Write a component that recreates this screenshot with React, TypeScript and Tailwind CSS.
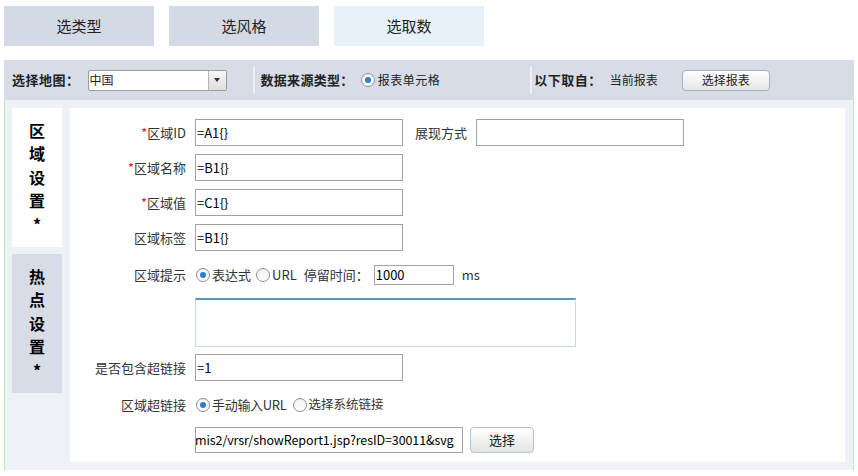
import React from 'react';

const FONT = '"Noto Sans CJK SC", "Noto Sans", sans-serif';

function Radio({ checked }: { checked?: boolean }) {
  return (
    <span className="inline-flex h-[14px] w-[14px] shrink-0 items-center justify-center rounded-full border border-[#8f8f8f] bg-gradient-to-b from-[#f2f2f2] to-white">
      {checked && <span className="h-[6px] w-[6px] rounded-full bg-[#2e7bd6]" />}
    </span>
  );
}

function Field({ label, required, value, className }: { label: string; required?: boolean; value?: string; className?: string }) {
  return (
    <div className={'flex h-[27px] items-center ' + (className ?? '')}>
      <label className="w-[116px] text-right text-[13px] text-[#333]">
        {required && <span className="text-[#e02020]">*</span>}
        {label}
      </label>
      <div className="ml-[9px] flex h-[27px] w-[208px] items-center border border-[#a3a3a3] bg-white px-[1px] text-[13px] text-black">
        {value}
      </div>
    </div>
  );
}

function SideTab({ chars, active }: { chars: string[]; active?: boolean }) {
  return (
    <div
      className={
        'flex h-[139px] w-[50px] flex-col items-center justify-center text-[16px] font-bold leading-[23.5px] text-black ' +
        (active ? 'bg-white' : 'bg-[#d7dce7]')
      }
    >
      {chars.map((c, i) => (
        <span key={i}>{c}</span>
      ))}
    </div>
  );
}

export default function App() {
  const tabs = [
    { name: '选类型', active: false },
    { name: '选风格', active: false },
    { name: '选取数', active: true },
  ];

  return (
    <div className="h-[476px] w-[858px] overflow-hidden bg-white" style={{ fontFamily: FONT }}>
      {/* steps */}
      <div className="ml-[4px] mt-[6px] flex gap-[15px]">
        {tabs.map((t) => (
          <div
            key={t.name}
            className={
              'flex h-[40px] w-[150px] items-center justify-center text-[15px] text-[#222] ' +
              (t.active ? 'bg-[#e8f0fa]' : 'bg-[#d3d9e5]')
            }
          >
            {t.name}
          </div>
        ))}
      </div>

      {/* toolbar */}
      <div className="mx-[4px] mt-[14px] flex h-[40px] items-center bg-[#d7dce7] pl-[8px] text-[12px] text-[#222]">
        <span className="text-[13px] font-bold tracking-[0.5px]">选择地图：</span>
        <div className="ml-[8px] flex h-[21px] w-[139px] items-stretch rounded-[2px] border border-[#9c9c9c] bg-white">
          <span className="flex-1 pl-[1px] text-[12px] leading-[18px]">中国</span>
          <span className="flex w-[18px] items-center justify-center border-l border-[#b5b5b5] bg-gradient-to-b from-[#f7f7f7] to-[#dedede]">
            <span className="h-0 w-0 border-x-[3.5px] border-t-[4px] border-x-transparent border-t-[#333]" />
          </span>
        </div>
        <span className="ml-[26px] h-[28px] w-[2px] bg-[#eceff5]" />
        <span className="ml-[6px] text-[13px] font-bold tracking-[0.3px]">数据来源类型：</span>
        <span className="ml-[7px] flex items-center gap-[3px]">
          <Radio checked />
          <span className="tracking-[0.5px]">报表单元格</span>
        </span>
        <span className="ml-[90px] h-[28px] w-[2px] bg-[#eceff5]" />
        <span className="ml-[2px] text-[13px] font-bold tracking-[0.5px]">以下取自：</span>
        <span className="ml-[8px]">当前报表</span>
        <button className="ml-[24px] h-[21px] w-[88px] rounded-[4px] border border-[#9fb4cc] bg-gradient-to-b from-white to-[#e6e6e6] text-[12px] text-[#222]">
          选择报表
        </button>
      </div>

      {/* content */}
      <div className="mx-[4px] flex h-[370px] gap-[8px] border-x border-[#b6efb6] bg-[#eef1f6] pb-[8px] pl-[7px] pr-[8px] pt-[8px]">
        <div className="flex flex-col gap-[7px]">
          <SideTab chars={['区', '域', '设', '置', '*']} active />
          <SideTab chars={['热', '点', '设', '置', '*']} />
        </div>

        <div className="flex-1 bg-white pt-[11px]">
          <div className="flex items-center">
            <Field label="区域ID" required value="=A1{}" />
            <span className="ml-[12px] text-[13px] text-[#333]">展现方式</span>
            <div className="ml-[9px] h-[27px] w-[208px] border border-[#a3a3a3]" />
          </div>
          <Field className="mt-[8px]" label="区域名称" required value="=B1{}" />
          <Field className="mt-[8px]" label="区域值" required value="=C1{}" />
          <Field className="mt-[8px]" label="区域标签" value="=B1{}" />

          <div className="mt-[10px] flex h-[27px] items-center text-[13px] text-[#333]">
            <label className="w-[116px] text-right">区域提示</label>
            <span className="ml-[10px] flex items-center gap-[2px]">
              <Radio checked />
              <span>表达式</span>
            </span>
            <span className="ml-[5px] flex items-center gap-[2px]">
              <Radio />
              <span>URL</span>
            </span>
            <span className="ml-[7px]">停留时间：</span>
            <div className="ml-[5px] flex h-[20px] w-[80px] items-center border border-[#a3a3a3] px-[1px] text-black">1000</div>
            <span className="ml-[8px]">ms</span>
          </div>

          <div className="ml-[125px] mt-[10px] h-[49px] w-[381px] border border-t-2 border-[#c9d9ea] border-t-[#5b93c5]" />

          <Field className="mt-[7px]" label="是否包含超链接" value="=1" />

          <div className="mt-[10px] flex h-[27px] items-center text-[13px] text-[#333]">
            <label className="w-[116px] text-right">区域超链接</label>
            <span className="ml-[10px] flex items-center gap-[2px]">
              <Radio checked />
              <span className="tracking-[-0.3px]">手动输入URL</span>
            </span>
            <span className="ml-[6px] flex items-center gap-[2px]">
              <Radio />
              <span className="text-[12.5px]">选择系统链接</span>
            </span>
          </div>

          <div className="ml-[125px] mt-[9px] flex items-center">
            <div className="flex h-[26px] w-[268px] items-center overflow-hidden whitespace-nowrap border border-[#a3a3a3] text-[12.5px] text-black">
              <span className="-ml-[1px] tracking-[-0.1px]">mis2/vrsr/showReport1.jsp?resID=30011&amp;svg</span>
            </div>
            <button className="ml-[7px] h-[26px] w-[64px] rounded-[4px] border border-[#b3c3d6] bg-gradient-to-b from-white to-[#e4e4e4] text-[13px] text-[#222]">
              选择
            </button>
          </div>
        </div>
      </div>
    </div>
  );
}
